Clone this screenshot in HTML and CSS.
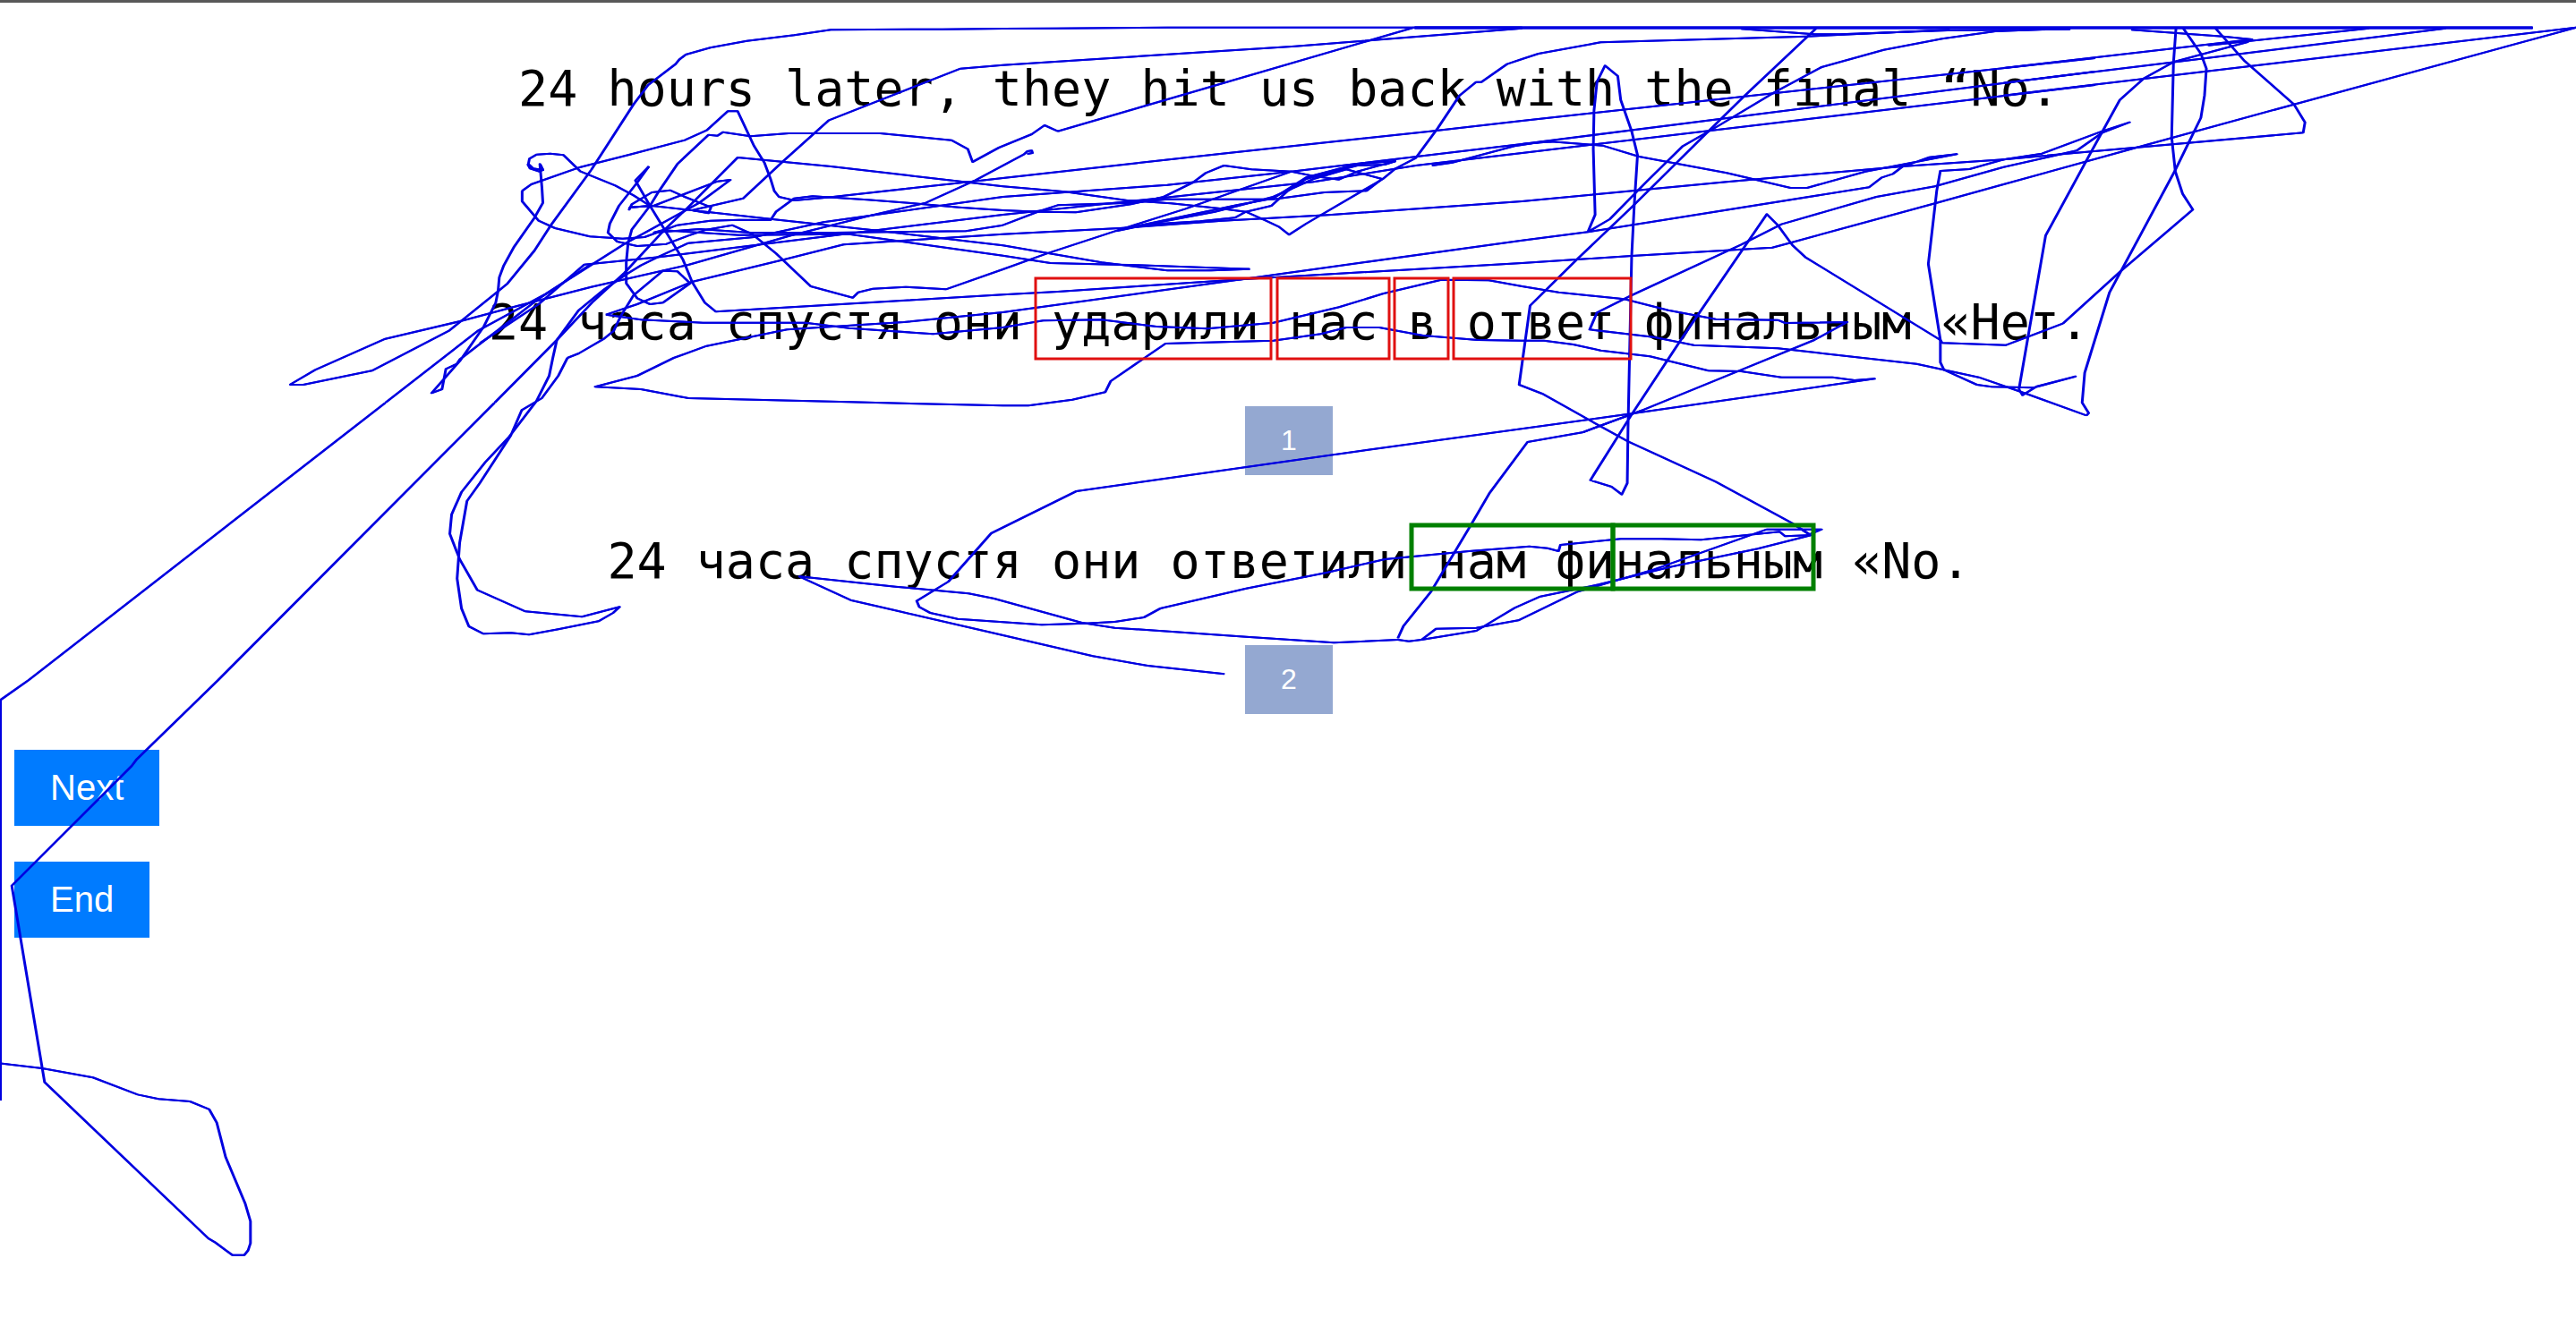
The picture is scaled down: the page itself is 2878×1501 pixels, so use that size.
FILE: index.html
```html
<!DOCTYPE html>
<html lang="ru">
<head>
<meta charset="utf-8">
<meta name="viewport" content="width=device-width, initial-scale=1">
<title>Translation choice</title>
<link rel="stylesheet" href="styles.css">
</head>
<body>
<main class="task">
  <p class="sentence source" lang="en">24 hours later, they hit us back with the final “No.</p>
  <section class="option">
    <p class="sentence">24 часа спустя они ударили нас в ответ финальным «Нет.</p>
    <button class="btn pick" type="button">1</button>
  </section>
  <section class="option">
    <p class="sentence">24 часа спустя они ответили нам финальным «No.</p>
    <button class="btn pick" type="button">2</button>
  </section>
  <nav class="actions">
    <button class="btn" type="button">Next</button>
    <button class="btn" type="button">End</button>
  </nav>
</main>

<!-- Gaze traces and word boxes, drawn over the page -->
<svg class="overlay" viewBox="0 0 2878 1501" aria-hidden="true">
  <g class="trace" id="trace">
    <!-- far left -->
    <g transform="translate(300 180) scale(.33333)">
      <path d="M70,750 155,700 390,596 650,535 835,485 1080,422"/>
      <path d="M70,750 115,750 345,703 605,568 770,435 800,410 890,300 945,215 1080,30"/>
      <path d="M867,10 875,25 905,35 918,30 908,10 915,90 918,140 890,190 820,290 787,350 772,390 768,435 760,475 720,555 640,670 545,778 580,765 593,697 630,680 640,665 770,565 900,465 1080,345"/>
    </g>
    <!-- upper left -->
    <g transform="translate(540 0) scale(.40816 .33333)">
      <path d="M294,962 560,888 840,790 1050,725 1210,680 1345,605 1478,518 1488,507 1500,505 1502,513 1488,516"/>
      <path d="M294,570 410,350 450,285 525,215 535,200 553,183 620,160 720,137 850,118 950,100 1255,98 1421,96"/>
      <path d="M154,550 162,570 135,565 122,550 125,532 145,518 182,515 218,520 265,575 360,622 410,655 455,690"/>
      <path d="M-269,1350 -17,1110 170,985 385,818 590,680 675,603 640,608 465,690 400,695 398,703 405,685 460,645 510,638 550,660 622,695 615,715 570,705 710,665 820,540 945,403 1305,230 1421,218"/>
      <path d="M-10,1150 150,1020 275,887 480,862 1000,783 1421,720"/>
      <path d="M30,1350 200,1140 300,1010 385,915 495,770 555,700 695,528 950,558 1421,625"/>
      <path d="M200,1140 260,1040 330,970 390,920 430,890 480,860 560,815 740,795 930,745 1421,660"/>
      <path d="M105,640 130,618 265,560 400,518 550,470 610,437 668,373 695,373 740,490 768,545 785,600 795,640 808,660 850,672 940,662 1340,608 1421,597"/>
      <path d="M105,640 105,675 150,740 195,765 290,793 380,800 440,795 530,755 620,740 700,737 785,738 800,710 850,665 900,658 1050,670 1190,683 1300,695 1421,705"/>
      <path d="M452,558 415,605 455,690 495,770 545,870 570,945 605,1015 635,1045 1421,988"/>
      <path d="M452,558 420,612 370,690 345,750 340,780 365,810 420,825 500,818 560,790 610,770 680,755 735,785 800,850 895,960 1010,998 1025,980 1065,968 1155,962 1265,970 1421,903"/>
      <path d="M229,1200 260,1185 330,1135 355,1110 375,1060 410,990 490,908 530,910 565,950 490,1015 455,1020 420,1000 390,950 390,880 395,815 405,770 455,690 480,640 530,550 615,452 640,455 655,443 730,457 835,447 1085,447 1280,470 1325,500 1338,543 1410,495 1500,450 1535,420 1571,440"/>
      <path d="M400,695 460,690 790,735 1090,775 1421,823"/>
      <path d="M465,780 490,772 700,788 1000,785 1421,857"/>
      <path d="M465,780 590,768 730,780 960,780 1320,775 1421,755"/>
      <path d="M335,1055 420,1020 570,945 830,868 985,820 1421,785"/>
      <path d="M335,1055 430,1072 600,1082 880,1082 1000,1100 1230,1120 1421,1098"/>
      <path d="M1421,1047 1150,1080 830,1105 610,1160 520,1200 420,1260 305,1297 430,1305 560,1335 1000,1348 1421,1360"/>
    </g>
    <!-- upper middle -->
    <g transform="translate(1120 0) scale(.40816 .33333)">
      <path d="M0,96 145,95 450,92 1421,92"/>
      <path d="M150,440 600,280 1125,92"/>
      <path d="M0,218 800,155 1421,95"/>
      <path d="M0,597 600,515 1170,440 1421,405"/>
      <path d="M0,660 450,620 790,575 1421,483"/>
      <path d="M0,720 400,668 850,610 1130,555 1421,513"/>
      <path d="M0,625 170,643 340,672 460,682 600,700 665,710 720,740 755,760 783,787 830,750 1040,600 1075,565 1130,530 1190,430 1250,320 1295,275 1310,275 1380,215 1421,198"/>
      <path d="M0,705 100,710 200,712 350,685 440,660 520,612 555,580 605,555 680,568 790,575 850,590 920,602 970,575 1075,540"/>
      <path d="M0,755 100,708 150,688 350,680 450,668 740,668 880,645 995,640 1038,600 940,568 850,600 740,660 580,710 370,758 320,770"/>
      <path d="M310,775 400,752 540,742 635,730 665,710 735,690 780,640 830,600 970,555 1045,552 1075,540"/>
      <path d="M320,770 640,688 740,665 830,595 970,550 1075,540"/>
      <path d="M0,785 320,765 600,740 900,720 1421,675"/>
      <path d="M0,823 270,880 450,907 570,907 675,902"/>
      <path d="M0,857 130,882 400,890 675,902"/>
      <path d="M0,903 120,850 320,770 500,700 790,575"/>
      <path d="M0,988 150,978 670,935 1421,882"/>
      <path d="M0,1047 710,927 1421,806"/>
      <path d="M0,1098 110,1075 270,1072 420,1095 560,1102 740,1082 920,1030 1040,985 1200,938 1330,940 1421,960"/>
      <path d="M0,1360 70,1360 190,1340 280,1315 295,1278 445,1152 740,1142 870,1120 940,1098 1030,1098 1150,1125 1300,1140 1421,1142"/>
      <path d="M1175,555 1230,545 1400,490 1480,475 1501,475"/>
    </g>
    <!-- upper right -->
    <g transform="translate(1700 0) scale(.40816 .33333)">
      <path d="M0,198 45,180 215,142 780,122 1170,100"/>
      <path d="M600,97 800,115 870,115 1165,102 1500,98"/>
      <path d="M0,405 1568,195"/>
      <path d="M0,483 1568,240"/>
      <path d="M0,513 1568,285"/>
      <path d="M0,483 80,475 220,488 320,525 560,580 735,630 780,630 940,575 1190,517 1115,527 1040,560 1015,583 985,595 950,628 180,778 0,806"/>
      <path d="M0,675 560,610 1040,558 1318,535"/>
      <path d="M0,882 300,858 685,830 740,812 1135,680 1318,618"/>
      <path d="M0,960 100,980 280,1003 400,1040 530,1070 700,1073 720,1083 890,1080 800,1140 600,1240 330,1375 165,1450"/>
      <path d="M0,1142 60,1142 140,1155 215,1175 350,1195 510,1243 600,1245 710,1265 850,1265 910,1275 965,1270 300,1387 -490,1520"/>
      <path d="M180,778 200,720 195,500 197,370 205,275 227,220 262,255 270,335 300,440 316,520 307,690 300,860 290,1440 288,1620 273,1658 245,1632 187,1610 300,1390 440,1130 670,718 700,755 740,822 775,862 1145,1140"/>
      <path d="M805,95 610,320 510,440 300,695 150,870 22,1025 -8,1290 55,1320 230,1440 290,1480 530,1615 740,1755 785,1790"/>
      <path d="M180,778 240,735 340,610 440,490 540,420 690,310 820,225 990,167 1150,130 1295,105 1470,97"/>
      <path d="M1318,560 1130,625 970,660 710,752 600,820 300,990 205,1048 185,1105 360,1130 470,1157 700,1168 1080,1220 1250,1265 1380,1320 1545,1393"/>
      <path d="M1318,535 1225,567 1145,573 1135,640 1112,885 1145,1140 1145,1215 1155,1240 1245,1290 1285,1297 1400,1300 1515,1262 1410,1295 1370,1325 1360,1305"/>
      <path d="M1145,1140 1150,1150 1325,1157 1480,1085"/>
    </g>
    <!-- far right -->
    <g transform="translate(2238 0) scale(.40816 .33333)">
      <path d="M0,228 680,132 600,122 350,100"/>
      <path d="M560,152 1000,95"/>
      <path d="M0,278 520,200 1210,95"/>
      <path d="M0,320 550,240 1568,92"/>
      <path d="M0,618 370,493 795,350 1568,92"/>
      <path d="M0,535 200,512 820,445 825,410 795,350 660,205 580,95"/>
      <path d="M0,560 200,505 270,445 345,410 270,440 105,515 0,535"/>
      <path d="M227,1393 233,1385 215,1350 222,1250 290,980 400,730 470,570 540,395 550,320 555,230 540,180 490,92"/>
      <path d="M42,1305 115,790 235,520 318,335 385,262 465,208 670,140"/>
      <path d="M162,1085 320,910 518,703 490,650 470,575 460,460 465,210 472,92"/>
    </g>
    <!-- lower left curve -->
    <g transform="translate(460 400) scale(.40816 .33333)">
      <path d="M425,0 400,60 355,135 300,175 270,260 185,420 150,480 130,620 123,740 135,840 155,900 195,925 270,922 320,928 400,910 510,883 550,855 568,835 465,868 310,850 178,778 130,675 103,590 108,525 135,450 200,350 265,265 340,145 375,60 385,0 396,-60"/>
      <path d="M1323,767 1060,733 1200,812 1323,847"/>
    </g>
    <!-- lower middle -->
    <g transform="translate(1000 440) scale(.40816 .33333)">
      <path d="M1225,200 495,327 262,468 145,630 58,695 65,715 95,735 170,755 400,775 520,770 600,765 680,750 725,720 960,653 1180,600 1340,555 1570,528"/>
      <path d="M0,647 200,670 270,687 510,768 600,785 960,815 1200,835 1375,825"/>
      <path d="M0,727 260,800 540,880 690,912 900,940"/>
    </g>
    <g transform="translate(1500 440) scale(.40816 .33333)">
      <path d="M345,528 510,512 560,518 590,528 595,507 760,487 870,487 980,490 1195,463 1210,478 1270,475 1310,455 1160,455 850,590 640,665 480,760 365,785 255,788 215,825 180,830 150,825"/>
      <path d="M1230,435 1280,475 1135,520 900,580 700,640 540,680 470,718 365,795 215,825"/>
      <path d="M655,130 505,162 400,335 350,440 240,665 165,780 150,820"/>
      <path d="M655,130 820,55"/>
    </g>
    <!-- lines down to the left edge -->
    <g transform="translate(0 760) scale(.33333 .44643)">
      <path d="M0,1053 0,50 95,0 1290,-694"/>
      <path d="M0,960 140,972 310,995 460,1038 530,1049 635,1055 700,1075 725,1108 755,1195 820,1310 838,1355 838,1410 830,1428 817,1440 778,1440 720,1408 697,1398 148,1007 38,515 440,215 455,200 730,0 1656,-694"/>
    </g>
    <path class="bold" d="M1580,31H2829"/>
  </g>
  <!-- the pen is wider than it is tall, so steep strokes come out heavier -->
  <use href="#trace" x="1"/>
  <g class="source-boxes">
    <rect x="1157" y="311" width="263" height="90"/>
    <rect x="1427" y="311" width="125" height="90"/>
    <rect x="1558" y="311" width="60" height="90"/>
    <rect x="1624" y="311" width="198" height="90"/>
  </g>
  <g class="choice-boxes">
    <rect x="1577" y="587" width="225" height="71"/>
    <rect x="1802" y="587" width="224" height="71"/>
  </g>
</svg>
</body>
</html>
```
FILE: styles.css
```css
* {
  box-sizing: border-box;
}

body {
  margin: 0;
  position: relative;
  min-height: 100vh;
  overflow-x: hidden;
  background: #fff;
  border-top: 3px solid #585858;
  color: #000;
  font-family: "Liberation Sans", Arial, sans-serif;
}

.task {
  padding: 64px 14px 16px 16px;
}

.sentence {
  margin: 0;
  font-family: Consolas, "DejaVu Sans Mono", monospace;
  font-size: 55px;
  line-height: 64px;
  text-align: center;
}

.source {
  margin-bottom: 197px;
}

.option {
  display: flex;
  flex-direction: column;
  align-items: center;
  gap: 62px;
  margin-bottom: 64px;
}

.option + .actions {
  margin-top: -24px;
}

.btn {
  padding: 20px 40px;
  border: 0;
  background: #007bff;
  color: #fff;
  font-family: inherit;
  font-size: 40px;
  line-height: 45px;
  cursor: pointer;
}

.pick {
  background: #94a8d1;
  font-size: 32px;
  line-height: 37px;
}

.actions {
  display: flex;
  flex-direction: column;
  align-items: flex-start;
  gap: 40px;
}

.overlay {
  position: absolute;
  top: -3px;
  left: 0;
  width: 100%;
  pointer-events: none;
  fill: none;
}

.trace path {
  stroke: #0000e0;
  stroke-width: 2px;
  stroke-linejoin: round;
  vector-effect: non-scaling-stroke;
}

.trace .bold {
  stroke-width: 3px;
}

.source-boxes {
  stroke: #e01010;
  stroke-width: 3px;
}

.choice-boxes {
  stroke: #008000;
  stroke-width: 5px;
}
```
